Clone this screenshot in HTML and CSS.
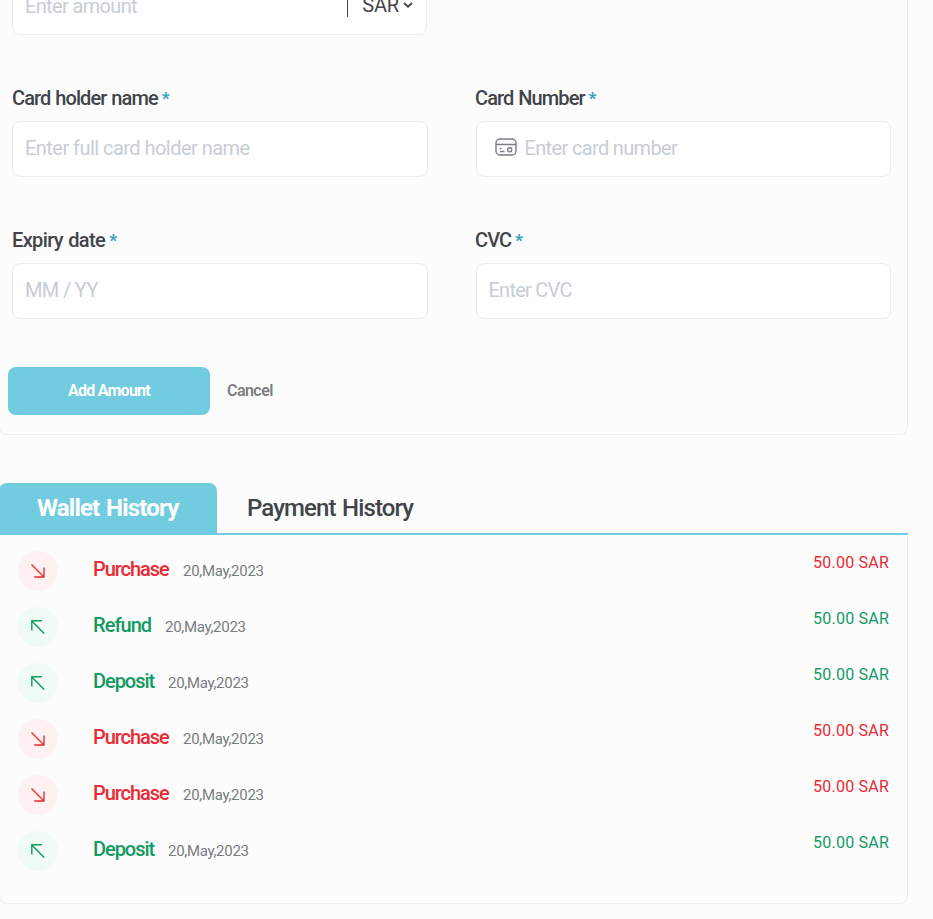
FILE: index.html
```html
<!DOCTYPE html>
<html lang="en">
<head>
<meta charset="utf-8">
<title>Wallet</title>
<link rel="stylesheet" href="styles.css">
</head>
<body>
<svg width="0" height="0" class="defs">
  <symbol id="out" viewBox="0 0 16 16"><path d="M1.5 1.5L14 14M14 4.5V14H4.2" fill="none" stroke="currentColor" stroke-width="1.4"/></symbol>
  <symbol id="in" viewBox="0 0 16 16"><path d="M14.2 14.5L1.8 2M1.8 11.5V1.8H11.8" fill="none" stroke="currentColor" stroke-width="1.4"/></symbol>
</svg>
<main class="page">
  <form class="panel form">
    <div class="control amount">
      <span class="placeholder s-amount">Enter amount</span>
      <span class="currency"><span class="code">SAR</span><svg width="10" height="8" viewBox="0 0 10 8"><path d="M1 2L5 5.6L9 2" fill="none" stroke="currentColor" stroke-width="1.9"/></svg></span>
    </div>
    <div class="fields">
      <div class="field"><label class="s-holder">Card holder name <b>*</b></label><div class="control"><span class="placeholder s-full">Enter full card holder name</span></div></div>
      <div class="field"><label class="s-number">Card Number <b>*</b></label><div class="control with-icon">
        <svg class="card-icon" width="22" height="18" viewBox="0 0 22 18" fill="none" stroke="#797e87" stroke-width="1.4"><rect x="1" y="1" width="20" height="16" rx="4"/><path d="M1 6.5H21M4.5 10.5H6.5M5 13.5H9.5"/><rect x="12.7" y="9.7" width="4" height="4" rx="1.5"/></svg>
        <span class="placeholder s-cardno">Enter card number</span></div></div>
      <div class="field"><label class="s-expiry">Expiry date <b>*</b></label><div class="control"><span class="placeholder s-mm">MM / YY</span></div></div>
      <div class="field"><label class="s-cvc">CVC <b>*</b></label><div class="control"><span class="placeholder s-entercvc">Enter CVC</span></div></div>
    </div>
    <div class="actions"><button type="button" class="primary">Add Amount</button><button type="button" class="cancel">Cancel</button></div>
  </form>
  <section>
    <nav class="tabs"><a class="tab active">Wallet History</a><a class="tab">Payment History</a></nav>
    <ul class="panel history">
      <li class="debit"><span class="badge"><svg width="16" height="16"><use href="#out"/></svg></span><span class="kind">Purchase</span><time>20,May,2023</time><span class="sum">50.00 SAR</span></li>
      <li class="credit"><span class="badge"><svg width="16" height="16"><use href="#in"/></svg></span><span class="kind refund">Refund</span><time>20,May,2023</time><span class="sum">50.00 SAR</span></li>
      <li class="credit"><span class="badge"><svg width="16" height="16"><use href="#in"/></svg></span><span class="kind deposit">Deposit</span><time>20,May,2023</time><span class="sum">50.00 SAR</span></li>
      <li class="debit"><span class="badge"><svg width="16" height="16"><use href="#out"/></svg></span><span class="kind">Purchase</span><time>20,May,2023</time><span class="sum">50.00 SAR</span></li>
      <li class="debit"><span class="badge"><svg width="16" height="16"><use href="#out"/></svg></span><span class="kind">Purchase</span><time>20,May,2023</time><span class="sum">50.00 SAR</span></li>
      <li class="credit"><span class="badge"><svg width="16" height="16"><use href="#in"/></svg></span><span class="kind deposit">Deposit</span><time>20,May,2023</time><span class="sum">50.00 SAR</span></li>
    </ul>
  </section>
</main>
</body>
</html>
```
FILE: styles.css
```css
* { box-sizing: border-box; }
body { margin: 0; height: 919px; overflow: hidden; background: #fcfcfc; color: #414449; font-family: Roboto, sans-serif; }
.defs { display: block; height: 0; }
.page { width: 909px; margin-left: -1px; }
.panel { border: 1px solid #ededed; border-radius: 8px; }
.form { height: 455px; margin-top: -20px; border-top: 0; padding: 0 16px 0 12px; }
.control { height: 56px; display: flex; align-items: center; padding: 0 12px; background: #fff; border: 1px solid #ededed; border-radius: 8px; }
.amount { width: 415px; height: 55px; justify-content: space-between; padding: 0 13px 4px 12px; }
.placeholder { color: #c7cdd5; font-size: 20px; line-height: 24px; white-space: nowrap; margin-top: -3px; letter-spacing: -0.65px; }
.amount .placeholder { margin-top: 0; }
.currency { display: flex; align-items: center; height: 23px; margin-top: -1px; padding-left: 14px; border-left: 1px solid #414449; font-size: 20px; }
.code { letter-spacing: -0.2px; }
.currency svg { margin-left: 4px; }
.fields { display: grid; grid-template-columns: 416px 415px; column-gap: 48px; row-gap: 48px; padding-top: 48px; }
.field { display: flex; flex-direction: column; height: 94px; justify-content: flex-end; }
label { height: 38px; padding-top: 3px; font-size: 20px; line-height: 24px; font-weight: 500; white-space: nowrap; letter-spacing: -0.9px; word-spacing: 0.8px; }
label b { position: relative; top: -1px; left: -1px; color: #3a9fb8; font-size: 17px; font-weight: 900; letter-spacing: 0; }
.s-number, .s-cvc { margin-left: -1px; }
.s-expiry { letter-spacing: -0.62px; }
.s-full { letter-spacing: -0.54px; }
.with-icon { padding-left: 18px; }
.card-icon { margin: -4px 7.5px 0 0; }
.s-entercvc { margin-left: -0.5px; letter-spacing: -0.75px; }
.actions { display: flex; padding-top: 48px; margin-left: -4px; }
button { height: 48px; padding: 0; border: 0; font: 500 16px/20px Roboto, sans-serif; }
.primary { width: 202px; border-radius: 8px; background: #71cce0; color: #fff; font-weight: 700; letter-spacing: -0.75px; }
.cancel { margin-left: 17px; background: none; color: #797e80; font-weight: 600; letter-spacing: -0.55px; }
.tabs { display: flex; height: 52px; margin-top: 48px; border-bottom: 2px solid #71cce0; }
.tab { font-size: 24px; line-height: 50px; font-weight: 500; margin-left: 30px; letter-spacing: -0.9px; word-spacing: 1.5px; }
.tab.active { width: 218px; height: 52px; margin-left: 0; padding-left: 38px; background: #71cce0; color: #fff; font-weight: 700; border-radius: 8px 8px 0 0; letter-spacing: -0.8px; }
.history { list-style: none; margin: 0; height: 369px; padding: 8px 18px 0; border-top: 0; border-radius: 0 0 8px 8px; }
li { display: flex; align-items: center; height: 56px; }
.badge { width: 40px; height: 40px; border-radius: 50%; display: grid; place-items: center; margin-right: 35px; }
.debit { color: #eb2a33; }
.credit { color: #129a60; }
.debit .badge { background: #fff1f1; }
.credit .badge { background: #f0faf6; }
.kind { width: 77px; font-size: 20px; font-weight: 500; margin-top: -5px; letter-spacing: -1.05px; }
.refund { width: 59px; letter-spacing: -0.95px; }
.deposit { width: 62px; letter-spacing: -1.05px; }
time { font-size: 15px; color: #797e80; margin-left: 13px; letter-spacing: -0.3px; }
.sum { margin-left: auto; margin-top: -17px; font-size: 16px; letter-spacing: 0.22px; }
```
